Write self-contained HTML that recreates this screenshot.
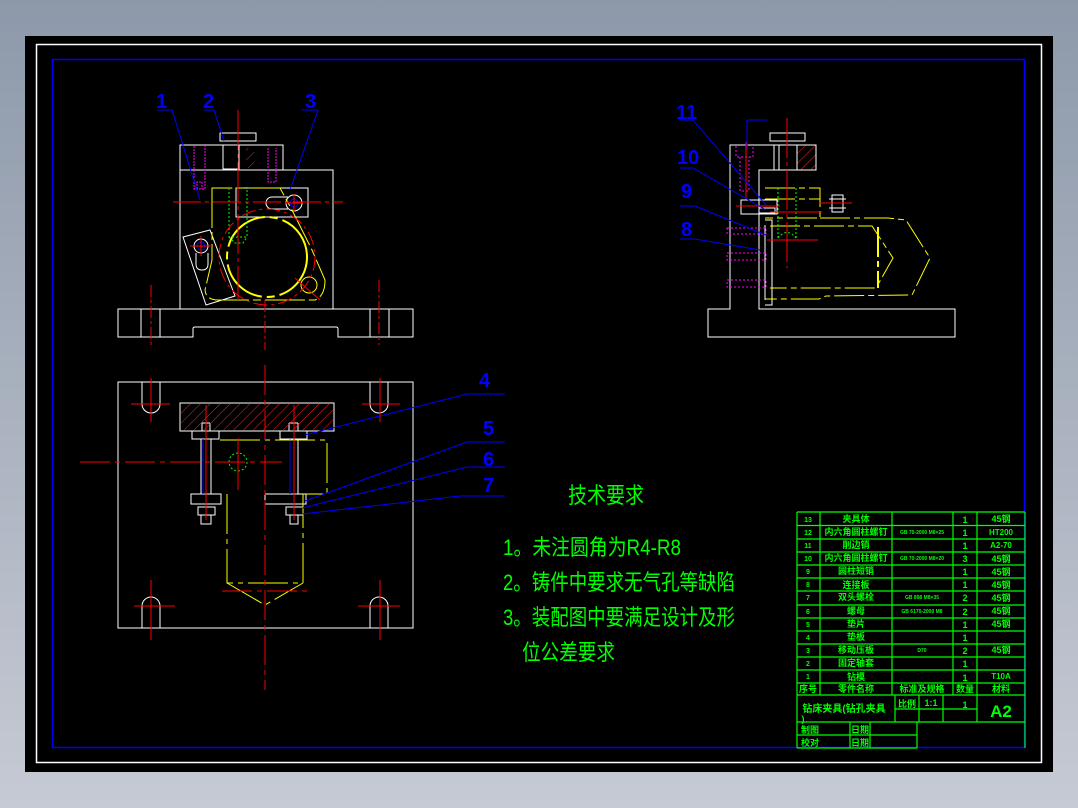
<!DOCTYPE html>
<html><head><meta charset="utf-8"><style>
html,body{margin:0;padding:0;width:1078px;height:808px;overflow:hidden}
body{background:linear-gradient(#8d99aa,#c6cad4);}
svg{position:absolute;left:0;top:0}
text{font-family:"Liberation Sans","Noto Sans CJK SC",sans-serif}
</style></head><body>
<svg width="1078" height="808" viewBox="0 0 1078 808" xmlns="http://www.w3.org/2000/svg">
<defs>
<pattern id="h" width="7" height="7" patternUnits="userSpaceOnUse" patternTransform="rotate(45)">
<line x1="0" y1="0" x2="0" y2="7" stroke="#ff2020" stroke-width="1"/></pattern>
</defs>
<rect x="25" y="36" width="1028" height="736" fill="#000"/>
<rect x="36.5" y="44.5" width="1005" height="718" fill="none" stroke="#fff" stroke-width="1.5"/>
<rect x="52.5" y="59.5" width="972" height="688" fill="none" stroke="#0000ff" stroke-width="1.5"/>

<g fill="none" stroke-width="1">
<!-- FRONT VIEW -->
<g stroke="#fff">
<path d="M118 309H413V337H338V329Q338 327 336 327H195Q193 327 193 329V337H118Z"/>
<path d="M141 309V337M160 309V337M370 309V337M389 309V337"/>
<rect x="180" y="170" width="153" height="139"/>
<rect x="180" y="145" width="103" height="25"/>
<path d="M223 145V169H239V145M220 141V133H256V141ZM226 141H239"/>
<rect x="236" y="188" width="72" height="29"/>
<circle cx="294" cy="203" r="8"/><path d="M288 197h-16a6 6 0 0 0 0 12h16"/>
<path d="M183 237L210 230L235 296L206 305Z"/>
<circle cx="201" cy="246" r="7"/><path d="M196 253V264Q196 270 202 270Q208 270 208 264V253"/>
</g>
<rect x="246" y="148" width="8" height="20" fill="url(#h)"/>
<g stroke="#ff00ff" stroke-dasharray="2 1"><path d="M194 146V189H205V146M197 189V182h5V189"/><path d="M268 148V182H276V148"/></g>
<circle cx="294" cy="203" r="4" stroke="#0000ff"/><circle cx="201" cy="246" r="4" stroke="#0000ff"/>
<g stroke="#ffff00">
<circle cx="267" cy="257" r="40" stroke-width="2" stroke-dasharray="50 5 8 5"/>
<path d="M212 188V260L205 290Q206 300 218 300L315 300Q325 296 325 280L312 250L292 210L280 188Z" stroke-dasharray="40 4 8 4"/>
<circle cx="309" cy="285" r="8"/>
</g>
<g stroke="#00ff00" stroke-dasharray="2 2"><path d="M229 188V237H247V188M229 237L235 243H243L247 237"/></g>
<g stroke="#ff0000">
<circle cx="267" cy="257" r="48" stroke-dasharray="14 4 3 4"/>
<path d="M173 202H343" stroke-dasharray="28 4 4 4"/>
<path d="M238 110V300" stroke-dasharray="40 4 4 4"/>
<path d="M265 300V350M151 285V345M379 280V345" stroke-dasharray="12 3 3 3"/>
<path d="M190 246H212M201 236V256M285 203H303M294 194V212"/>
<path d="M295 278L320 300"/>
</g>
<g stroke="#0000ff"><path d="M157 110H172L200 200M204 110H214L224 141M302 110H318L290 190"/></g>
<g fill="#0000ff" font-family="Liberation Serif" font-size="20" font-weight="bold"><text x="156" y="108">1</text><text x="203" y="108">2</text><text x="305" y="108">3</text></g>

<!-- BOTTOM VIEW -->
<g stroke="#fff">
<rect x="118" y="382" width="295" height="246"/>
<path d="M142 382V404a9 9 0 0 0 18 0V382M370 382V404a9 9 0 0 0 18 0V382M142 628V606a9 9 0 0 1 18 0V628M370 628V606a9 9 0 0 1 18 0V628"/>
<rect x="180" y="403" width="154" height="28"/>
<rect x="192" y="431" width="27" height="8"/><rect x="280" y="431" width="27" height="8"/>
<path d="M201 439V494M211 439V494M290 439V494M298 439V494M202 423V431M210 423V431M202 423H210M289 423V431M298 423V431M289 423H298"/>
<rect x="191" y="494" width="30" height="10"/><rect x="265" y="494" width="41" height="10"/>
<rect x="198" y="507" width="17" height="8"/><rect x="286" y="507" width="17" height="8"/>
<path d="M201 515V524H211V515M290 515V524H298V515"/>
</g>
<rect x="181" y="404" width="152" height="26" fill="url(#h)"/>
<g stroke="#0000ff"><path d="M203 439V494M290 439V494"/></g>
<g stroke="#ffff00" stroke-dasharray="40 5 5 5"><path d="M220 440H327V494H306M227 494V583H303V494M227 583L265 605L303 583"/></g>
<circle cx="238" cy="462" r="9" stroke="#00ff00" stroke-dasharray="2 2"/>
<g stroke="#ff0000">
<path d="M80 462H282M265 365V690M222 591H310" stroke-dasharray="30 5 5 5"/>
<path d="M238 438V490M206 405V520M294 405V520"/>
<path d="M131 404H170M151 378V422M362 404H400M380 378V422M134 606H175M151 580V640M358 606H400M380 580V640"/>
</g>
<g stroke="#0000ff"><path d="M305 435L467 394H505M305 501L467 442H505M302 508L467 467H505M302 514L460 496H505"/></g>
<g fill="#0000ff" font-family="Liberation Serif" font-size="20" font-weight="bold"><text x="479" y="387">4</text><text x="483" y="435">5</text><text x="483" y="466">6</text><text x="483" y="492">7</text></g>

<!-- SIDE VIEW -->
<g stroke="#fff">
<path d="M708 309H730V145H816V170H759V309H955V337H708Z"/>
<path d="M774 170V145M770 141V133H805V141ZM779 145V170M759 208H775V213H759M741 200V214H777V200ZM765 225V300M765 220H772V305H765"/>
<rect x="832" y="195" width="11" height="17"/><path d="M829 199H846M829 208H846"/>
<rect x="797" y="145" width="19" height="25" fill="url(#h)"/>
</g>
<g stroke="#ffff00" stroke-dasharray="30 4 6 4"><path d="M765 188H820V218H765M765 199H820M820 218H888L906 220L930 258L912 295L826 296L819 299H765M770 226H872L893 258L876 288H770"/><path d="M878 227V288" stroke-width="2"/></g>
<g stroke="#00ff00" stroke-dasharray="2 2"><path d="M778 188V238M796 188V238M778 238Q787 227 796 238"/></g>
<g stroke="#ff00ff" stroke-dasharray="2 2"><path d="M736 146V157H753V146M740 157V191H749V157M727 228H766V234H727ZM727 253H766V260H727ZM727 280H766V287H727Z"/></g>
<g stroke="#ff0000"><path d="M787 118V268" stroke-dasharray="40 4 4 4"/><path d="M746 142V198M736 206H780M770 212H822M767 240H818M819 203H852"/></g>
<g stroke="#0000ff"><path d="M680 120H693L766 205M680 168H693L766 210M680 206H695L766 235M680 239H695L760 250M747 120V150M747 120H767"/></g>
<g fill="#0000ff" font-family="Liberation Serif" font-size="20" font-weight="bold"><text x="676" y="119">11</text><text x="677" y="164">10</text><text x="681" y="198">9</text><text x="681" y="236">8</text></g>
</g>

<!-- TECH TEXT -->
<g fill="#00ff00" font-size="22">
<text x="568" y="503" textLength="76" lengthAdjust="spacingAndGlyphs">技术要求</text>
<text x="503" y="555" textLength="178" lengthAdjust="spacingAndGlyphs">1。未注圆角为R4-R8</text>
<text x="503" y="590" textLength="232" lengthAdjust="spacingAndGlyphs">2。铸件中要求无气孔等缺陷</text>
<text x="503" y="625" textLength="232" lengthAdjust="spacingAndGlyphs">3。装配图中要满足设计及形</text>
<text x="522" y="660" textLength="93" lengthAdjust="spacingAndGlyphs">位公差要求</text>
</g>

<!-- TITLE BLOCK -->
<g stroke="#00ff00" stroke-width="1.2" fill="none">
<path d="M797 512H1025M797 525.5H1025M797 539H1025M797 552H1025M797 565H1025M797 578H1025M797 591H1025M797 605H1025M797 618H1025M797 631H1025M797 644H1025M797 657H1025M797 670H1025M797 683H1025M797 695H1025M797 722H1025"/>
<path d="M797 512V748M820 512V695M892 512V695M953 512V695M977 512V722M1025 512V748"/>
<path d="M895 695V722M919 695V722M943 695V722M895 709H977M797 735H917M850 722V748M870 722V748M917 722V748M797 748H917"/>
</g>
<g fill="#00ff00" font-size="9" text-anchor="middle" font-weight="bold">
<text x="808" y="522" font-size="7">13</text><text x="856" y="522">夹具体</text><text x="965" y="523">1</text><text x="1001" y="522">45钢</text>
<text x="808" y="535" font-size="7">12</text><text x="856" y="535">内六角圆柱螺钉</text><text x="922" y="534" font-size="5">GB 70-2000 M8×25</text><text x="965" y="536">1</text><text x="1001" y="535" font-size="8">HT200</text>
<text x="808" y="548" font-size="7">11</text><text x="856" y="548">削边销</text><text x="965" y="549">1</text><text x="1001" y="548" font-size="8">A2-70</text>
<text x="808" y="561" font-size="7">10</text><text x="856" y="561">内六角圆柱螺钉</text><text x="922" y="560" font-size="5">GB 70-2000 M8×20</text><text x="965" y="562">3</text><text x="1001" y="562">45钢</text>
<text x="808" y="574" font-size="7">9</text><text x="856" y="574">圆柱短销</text><text x="965" y="575">1</text><text x="1001" y="575">45钢</text>
<text x="808" y="587" font-size="7">8</text><text x="856" y="588">连接板</text><text x="965" y="588">1</text><text x="1001" y="588">45钢</text>
<text x="808" y="600" font-size="7">7</text><text x="856" y="600">双头螺栓</text><text x="922" y="599" font-size="5">GB 898 M8×35</text><text x="965" y="601">2</text><text x="1001" y="601">45钢</text>
<text x="808" y="614" font-size="7">6</text><text x="856" y="614">螺母</text><text x="922" y="613" font-size="5">GB 6170-2000 M8</text><text x="965" y="615">2</text><text x="1001" y="614">45钢</text>
<text x="808" y="627" font-size="7">5</text><text x="856" y="627">垫片</text><text x="965" y="628">1</text><text x="1001" y="627">45钢</text>
<text x="808" y="640" font-size="7">4</text><text x="856" y="640">垫板</text><text x="965" y="641">1</text>
<text x="808" y="653" font-size="7">3</text><text x="856" y="653">移动压板</text><text x="922" y="652" font-size="5">D70</text><text x="965" y="654">2</text><text x="1001" y="653">45钢</text>
<text x="808" y="666" font-size="7">2</text><text x="856" y="666">固定轴套</text><text x="965" y="667">1</text>
<text x="808" y="679" font-size="7">1</text><text x="856" y="680">钻模</text><text x="965" y="681">1</text><text x="1001" y="679" font-size="8">T10A</text>
<text x="808" y="692">序号</text><text x="856" y="692">零件名称</text><text x="922" y="692">标准及规格</text><text x="965" y="692">数量</text><text x="1001" y="692">材料</text>
<text x="844" y="712" font-size="10">钻床夹具(钻孔夹具</text><text x="803" y="722" font-size="9">)</text>
<text x="907" y="707">比例</text><text x="931" y="706">1:1</text><text x="965" y="708">1</text>
<text x="1001" y="717" font-size="17" font-family="Liberation Serif">A2</text>
<text x="810" y="733">制图</text><text x="860" y="733">日期</text>
<text x="810" y="746">校对</text><text x="860" y="746">日期</text>
</g>
</svg>
</body></html>
